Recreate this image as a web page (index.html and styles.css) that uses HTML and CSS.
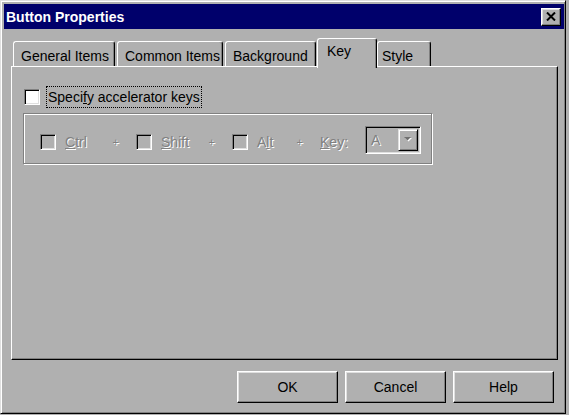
FILE: index.html
```html
<!DOCTYPE html>
<html>

<head>
  <meta charset="UTF-8">
  <meta name="viewport" content="width=device-width, initial-scale=1">
  <title>Button Properties</title>
  <link rel="stylesheet" href="styles.css">
</head>

<body>
  <div class="window">
    <header class="titlebar">
      <h1>Button Properties</h1>
      <button class="close" aria-label="Close">
        <svg width="10" height="9" viewBox="0 0 10 9">
          <path d="M1 0.5 L9 8.5 M9 0.5 L1 8.5" stroke="#000" stroke-width="2" fill="none"/>
        </svg>
      </button>
    </header>

    <div class="content">
      <div class="tabs">
        <div class="tab tab-general">General Items</div>
        <div class="tab tab-common">Common Items</div>
        <div class="tab tab-background">Background</div>
        <div class="tab tab-key active">Key</div>
        <div class="tab tab-style">Style</div>
      </div>

      <div class="panel">
        <label class="option">
          <span class="box"></span>
          <span class="focus">Speci<u>f</u>y accelerator keys</span>
        </label>

        <div class="group">
          <div class="key">
            <span class="box off"></span>
            <span class="dim lab"><u>C</u>trl</span>
            <span class="dim plus">+</span>
          </div>
          <div class="key">
            <span class="box off"></span>
            <span class="dim lab"><u>S</u>hift</span>
            <span class="dim plus">+</span>
          </div>
          <div class="key key-alt">
            <span class="box off"></span>
            <span class="dim lab">A<u>l</u>t</span>
            <span class="dim plus">+</span>
          </div>
          <span class="dim"><u>K</u>ey:</span>
          <div class="combo">
            <span class="dim value">A</span>
            <span class="drop">
              <svg width="8" height="5" viewBox="0 0 8 5">
                <path d="M1 1 L8 1 L4.5 4.5 Z" fill="#fff"/>
                <path d="M0 0 L7 0 L3.5 3.5 Z" fill="#707070"/>
              </svg>
            </span>
          </div>
        </div>
      </div>

      <div class="actions">
        <button class="btn">OK</button>
        <button class="btn">Cancel</button>
        <button class="btn">Help</button>
      </div>
    </div>
  </div>
</body>

</html>
```

FILE: styles.css
```css
*{
  box-sizing: border-box;
  margin: 0;
  padding: 0;
}

body{
  background: #b0b0b0;
  font-family: "Liberation Sans", Arial, sans-serif;
  font-size: 14px;
  color: #000;
}

.window{
  width: 566px;
  height: 414px;
  border: 1px solid;
  border-color: #dfdfdf #000 #000 #dfdfdf;
  box-shadow: inset 1px 1px #fff, inset -1px -1px #808080;
  padding: 3px 1px 3px 3px;
  background: #b0b0b0;
}

/* title bar */
.titlebar{
  display: flex;
  align-items: center;
  justify-content: space-between;
  height: 25px;
  background: #00006b;
  color: #fff;
  padding-left: 2px;
}
.titlebar h1{
  font-size: 14px;
  font-weight: bold;
}
.close{
  width: 20px;
  height: 18px;
  margin-right: 3px;
  display: flex;
  align-items: center;
  justify-content: center;
  background: #b0b0b0;
  border: 1px solid;
  border-color: #fff #000 #000 #fff;
  box-shadow: inset -1px -1px #808080, inset 1px 1px #dfdfdf;
}

.content{
  padding: 9px 0 0 7px;
}

/* tabs */
.tabs{
  display: flex;
  align-items: flex-end;
  height: 28px;
  margin-left: 2px;
}
.tab{
  height: 25px;
  border: 1px solid;
  border-color: #fff #000 transparent #fff;
  border-bottom: 0;
  border-radius: 3px 3px 0 0;
  box-shadow: inset -1px 0 #808080;
  padding: 4px 0 0 7px;
  line-height: 20px;
  margin-right: 2px;
  white-space: nowrap;
}
.tab-general{ width: 102px; }
.tab-common{ width: 106px; }
.tab-background{ width: 91px; margin-right: 1px; }
.tab-key{ width: 60px; margin-right: 0; }
.tab-style{ width: 54px; padding-left: 4px; }
.tab.active{
  position: relative;
  height: 30px;
  margin-bottom: -2px;
  padding-top: 2px;
  padding-left: 9px;
  background: #b0b0b0;
}

/* tab page */
.panel{
  width: 547px;
  height: 294px;
  border: 1px solid;
  border-color: #fff #000 #000 #fff;
  box-shadow: inset -1px -1px #808080;
  padding: 19px 0 0 11px;
}

.option{
  display: flex;
  align-items: center;
  height: 22px;
  margin-left: 1px;
}
.box{
  display: inline-block;
  width: 16px;
  height: 16px;
  flex: none;
  background: #fff;
  border: 1px solid;
  border-color: #808080 #fff #fff #808080;
  box-shadow: inset 1px 1px #000, inset -1px -1px #dfdfdf;
}
.box.off{
  background: #b0b0b0;
}
.focus{
  margin-left: 6px;
  border: 1px dotted #000;
  padding: 0 1px;
  line-height: 20px;
}

.group{
  display: flex;
  align-items: center;
  width: 409px;
  height: 51px;
  margin-top: 5px;
  padding: 6px 0 0 16px;
  border: 1px solid #808080;
  box-shadow: inset 1px 1px #fff, 1px 1px #fff;
}
.key{
  display: flex;
  align-items: center;
  width: 96px;
}
.key-alt{
  width: 88px;
}
.dim{
  color: #808080;
  text-shadow: 1px 1px #fff;
}
.lab{
  margin-left: 9px;
}
.plus{
  margin-left: auto;
  margin-right: 17px;
  font-size: 11px;
}

.combo{
  display: flex;
  width: 56px;
  height: 28px;
  margin: 0 0 4px 17px;
  padding: 2px;
  border: 1px solid;
  border-color: #808080 #fff #fff #808080;
  box-shadow: inset 1px 1px #000, inset -1px -1px #dfdfdf;
}
.value{
  padding-left: 3px;
  line-height: 22px;
}
.drop{
  display: flex;
  align-items: center;
  justify-content: center;
  width: 20px;
  margin-left: auto;
  border: 1px solid;
  border-color: #dfdfdf #000 #000 #dfdfdf;
  box-shadow: inset 1px 1px #fff, inset -1px -1px #808080;
}

/* dialog buttons */
.actions{
  display: flex;
  justify-content: flex-end;
  gap: 7px;
  width: 547px;
  padding-right: 4px;
  margin-top: 11px;
}
.btn{
  width: 101px;
  height: 32px;
  font-family: inherit;
  font-size: 14px;
  color: #000;
  background: #b0b0b0;
  border: 1px solid;
  border-color: #fff #000 #000 #fff;
  box-shadow: inset -1px -1px #808080, inset 1px 1px #dfdfdf;
}
```
